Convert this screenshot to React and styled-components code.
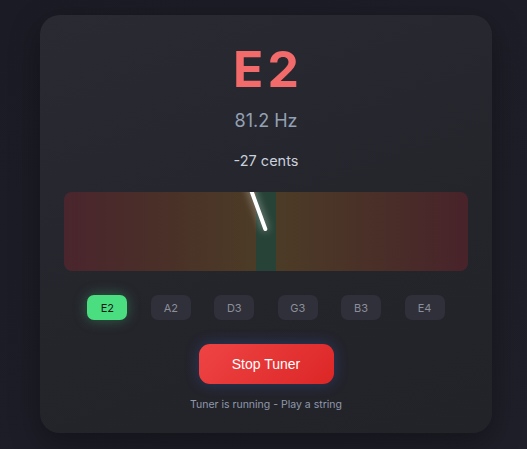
import React from "react";
import styled, { createGlobalStyle } from "styled-components";

const Global = createGlobalStyle`
  html, body {
    margin: 0;
    padding: 0;
    background: #1c1c25;
  }
  body {
    font-family: Inter, "Noto Sans", sans-serif;
    -webkit-font-smoothing: antialiased;
  }
`;

const Page = styled.div`
  width: 527px;
  height: 449px;
  box-sizing: border-box;
  padding: 15px 35px 16px 40px;
  background: linear-gradient(135deg, #1b1b25 0%, #1f1f29 100%);
`;

const Card = styled.div`
  width: 452px;
  height: 418px;
  box-sizing: border-box;
  border-radius: 20px;
  background: linear-gradient(160deg, #2a2a33 0%, #24242b 60%, #222229 100%);
  box-shadow: 0 10px 30px rgba(0, 0, 0, 0.35);
  padding: 26px 24px 0 24px;
  display: flex;
  flex-direction: column;
  align-items: center;
`;

const Note = styled.div`
  font-size: 50px;
  font-weight: 700;
  letter-spacing: 4px;
  line-height: 56px;
  color: #f26a6a;
  padding-left: 4px;
`;

const Freq = styled.div`
  margin-top: 13px;
  font-size: 18px;
  line-height: 22px;
  color: #94a0b4;
`;

const Cents = styled.div`
  margin-top: 20px;
  font-size: 14.5px;
  line-height: 18px;
  color: #c9d0dc;
`;

const Meter = styled.div`
  position: relative;
  margin-top: 22px;
  width: 404px;
  height: 79px;
  border-radius: 8px;
  overflow: hidden;
  background: linear-gradient(
    90deg,
    #4a252d 0%,
    #4a3028 25%,
    #4c3c26 48%,
    #4c3c26 52%,
    #4a3028 75%,
    #48232a 100%
  );
`;

const Zone = styled.div`
  position: absolute;
  top: 0;
  bottom: 0;
  left: 192px;
  width: 20px;
  background: #274236;
`;

const Needle = styled.div`
  position: absolute;
  left: 200px;
  bottom: 40px;
  width: 3.5px;
  height: 60px;
  border-radius: 2px;
  background: #ffffff;
  transform-origin: 50% 100%;
  transform: rotate(${(p) => p.$angle}deg);
  box-shadow: 0 0 8px rgba(255, 255, 255, 0.6);
`;

const Strings = styled.div`
  margin-top: 24px;
  width: 404px;
  display: flex;
  justify-content: space-evenly;
`;

const StringBtn = styled.div`
  width: 40px;
  height: 25px;
  border-radius: 7px;
  display: flex;
  align-items: center;
  justify-content: center;
  font-size: 11px;
  background: ${(p) => (p.$active ? "#4ade80" : "#30303a")};
  color: ${(p) => (p.$active ? "#0f1a14" : "#8b8f99")};
  box-shadow: ${(p) => (p.$active ? "0 0 14px rgba(74, 222, 128, 0.35)" : "none")};
`;

const StopButton = styled.div`
  margin-top: 24px;
  width: 135px;
  height: 40px;
  border-radius: 11px;
  display: flex;
  align-items: center;
  justify-content: center;
  font-family: "Liberation Sans", Arial, sans-serif;
  font-size: 14px;
  color: #ffffff;
  background: linear-gradient(135deg, #ef4444 0%, #dc2626 100%);
  box-shadow: 0 0 14px rgba(59, 100, 200, 0.35);
`;

const Status = styled.div`
  margin-top: 14px;
  font-size: 10.5px;
  color: #8f99ab;
`;

const strings = ["E2", "A2", "D3", "G3", "B3", "E4"];

export default function App() {
  return (
    <Page>
      <Global />
      <Card>
        <Note>E2</Note>
        <Freq>81.2 Hz</Freq>
        <Cents>-27 cents</Cents>
        <Meter>
          <Zone />
          <Needle $angle={-20} />
        </Meter>
        <Strings>
          {strings.map((s, i) => (
            <StringBtn key={s} $active={i === 0}>
              {s}
            </StringBtn>
          ))}
        </Strings>
        <StopButton>Stop Tuner</StopButton>
        <Status>Tuner is running - Play a string</Status>
      </Card>
    </Page>
  );
}
